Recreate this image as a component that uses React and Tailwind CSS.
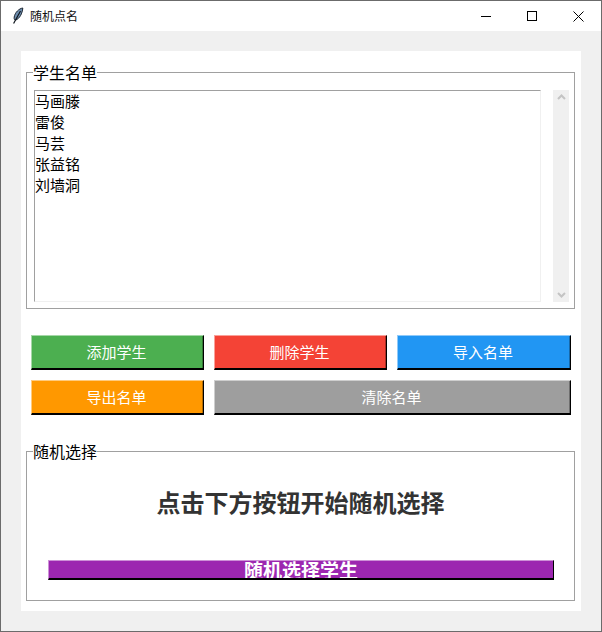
const cjk = "font-['Noto_Sans_CJK_SC','Liberation_Sans',sans-serif]"

const students = ['马画滕', '雷俊', '马芸', '张益铭', '刘墙洞']

const Feather = () => (
  <svg width="12" height="18" viewBox="0 0 12 18">
    <path d="M10.8 1 C7 1.5 3 5.5 2.2 10 C1.9 12.4 2.6 13.4 3.8 13 C7.4 11.8 10.4 6.5 10.8 1 Z" fill="#6f8fb0" stroke="#1c2530" strokeWidth="1" />
    <path d="M8.5 4 L1.6 16.5" stroke="#10161d" strokeWidth="1.2" fill="none" />
  </svg>
)

const TitleBar = () => (
  <div className="h-[30px] bg-white flex items-center shrink-0">
    <div className="ml-[11px] w-[18px] flex"><Feather /></div>
    <span className="text-[12px] text-[#111] leading-none">随机点名</span>
    <div className="ml-auto flex h-full">
      <div className="w-[46px] flex items-center justify-center">
        <svg width="10" height="10" viewBox="0 0 10 10"><path d="M0 5.5 H10" stroke="#000" strokeWidth="1" /></svg>
      </div>
      <div className="w-[46px] flex items-center justify-center">
        <svg width="10" height="10" viewBox="0 0 10 10"><rect x="0.5" y="0.5" width="9" height="9" fill="none" stroke="#000" strokeWidth="1" /></svg>
      </div>
      <div className="w-[46px] flex items-center justify-center">
        <svg width="11" height="11" viewBox="0 0 11 11"><path d="M0.5 0.5 L10.5 10.5 M10.5 0.5 L0.5 10.5" stroke="#000" strokeWidth="1" /></svg>
      </div>
    </div>
  </div>
)

const Btn = ({ className, children }) => (
  <button className={`h-[35px] pr-[2px] pb-[2px] border border-r-black border-b-black border-b-2 text-white text-[15px] leading-none shadow-[inset_-1px_0_0_rgba(0,0,0,0.3)] ${className}`}>
    {children}
  </button>
)

const Group = ({ title, className, children }) => (
  <fieldset className={`border border-[#a0a0a0] mx-0 min-w-0 ${className}`}>
    <legend className="ml-[6px] px-0 text-[16px] leading-[21px] text-black">{title}</legend>
    {children}
  </fieldset>
)

const StudentList = () => (
  <div className="flex h-[212px] ml-[7px] mr-[5px] mt-[7px]">
    <div className="flex-1 border border-t-[#a0a0a0] border-l-[#a0a0a0] border-r-[#f0f0f0] border-b-[#f0f0f0]">
      <div className="-mt-px">
        {students.map((name, i) => (
          <div key={`student_${i}`} className="text-[15px] leading-[21px] text-black">{name}</div>
        ))}
      </div>
    </div>
    <div className="w-[16px] ml-[12px] bg-[#f0f0f0] flex flex-col justify-between items-center py-[4px]">
      <svg width="9" height="6" viewBox="0 0 9 6"><path d="M1 5 L4.5 1.5 L8 5" fill="none" stroke="#c4c4c4" strokeWidth="2" /></svg>
      <svg width="9" height="6" viewBox="0 0 9 6"><path d="M1 1 L4.5 4.5 L8 1" fill="none" stroke="#c4c4c4" strokeWidth="2" /></svg>
    </div>
  </div>
)

export default function App() {
  return (
    <div className={`w-[602px] h-[632px] border border-[#6b6b6b] bg-[#f0f0f0] flex flex-col overflow-hidden ${cjk}`}>
      <TitleBar />
      <div className="flex-1 px-[20px] pt-[20px] pb-[20px] flex">
        <div className="flex-1 bg-white pl-[5px] pr-[6px] pt-[11px]">
          <Group title="学生名单" className="h-[247px]">
            <StudentList />
          </Group>
          <div className="grid grid-cols-[173px_173px_174px] gap-[10px] ml-[5px] mr-[4px] mt-[26px]">
            <Btn className="bg-[#4caf50] border-t-[#a5d7a7] border-l-[#a5d7a7]">添加学生</Btn>
            <Btn className="bg-[#f44336] border-t-[#f9a19a] border-l-[#f9a19a]">删除学生</Btn>
            <Btn className="bg-[#2196f3] border-t-[#90caf9] border-l-[#90caf9]">导入名单</Btn>
            <Btn className="bg-[#ff9800] border-t-[#ffcb7f] border-l-[#ffcb7f]">导出名单</Btn>
            <Btn className="col-span-2 bg-[#9e9e9e] border-t-[#cecece] border-l-[#cecece]">清除名单</Btn>
          </div>
          <Group title="随机选择" className="h-[160px] mt-[26px]">
            <div className="text-center text-[24px] leading-[32px] font-bold text-[#333] mt-[24px]">点击下方按钮开始随机选择</div>
            <div className="ml-[21px] mr-[20px] mt-[42px] h-[20px] bg-[#9c27b0] border border-t-[#cd92d7] border-l-[#cd92d7] border-r-black border-b-black border-b-2 text-white text-[19px] font-bold leading-[17px] text-center overflow-hidden">
              随机选择学生
            </div>
          </Group>
        </div>
      </div>
    </div>
  )
}
